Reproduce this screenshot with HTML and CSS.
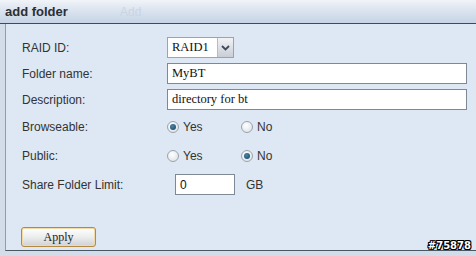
FILE: index.html
```html
<!DOCTYPE html>
<html lang="en">
<head>
    <meta charset="UTF-8">
    <title>add folder</title>
    <link rel="stylesheet" href="styles.css">
</head>
<body>
    <!-- Title bar -->
    <div class="title-bar">
        <span class="title">add folder</span>
        <span class="ghost">Add</span>
    </div>

    <!-- Form panel -->
    <div class="panel">
        <div class="row">
            <label class="field-label">RAID ID:</label>
            <div class="select-box">
                <span class="select-value">RAID1</span>
                <span class="select-arrow">
                    <svg width="9" height="6" viewBox="0 0 9 6"><path d="M1 1 L4.5 4.5 L8 1" fill="none" stroke="#3b4a5c" stroke-width="1.8"/></svg>
                </span>
            </div>
        </div>
        <div class="row">
            <label class="field-label">Folder name:</label>
            <div class="text-input wide">MyBT</div>
        </div>
        <div class="row">
            <label class="field-label">Description:</label>
            <div class="text-input wide">directory for bt</div>
        </div>
        <div class="row radio-row first">
            <label class="field-label">Browseable:</label>
            <span class="radio-opt"><span class="radio checked"></span>Yes</span>
            <span class="radio-opt"><span class="radio"></span>No</span>
        </div>
        <div class="row radio-row">
            <label class="field-label">Public:</label>
            <span class="radio-opt"><span class="radio"></span>Yes</span>
            <span class="radio-opt"><span class="radio checked"></span>No</span>
        </div>
        <div class="row limit-row">
            <label class="field-label">Share Folder Limit:</label>
            <div class="text-input small">0</div>
            <span class="unit">GB</span>
        </div>

        <button class="apply-button">Apply</button>
    </div>

    <span class="watermark">#75878</span>
</body>
</html>
```

FILE: styles.css
```css
body {
    margin: 0;
    width: 476px;
    height: 256px;
    overflow: hidden;
    position: relative;
    background-color: #d3dde9;
    font-family: "Liberation Sans", Arial, sans-serif;
    font-size: 12px;
    color: #333;
}

/* Title bar */
.title-bar {
    height: 23px;
    border-bottom: 1px solid #3e4b59;
    background: linear-gradient(#f1f4f9, #dde5f0 40%, #c6d4e6);
    display: flex;
    align-items: center;
    padding-left: 5px;
}

.title {
    font-size: 13px;
    font-weight: bold;
    color: #2a2f36;
    width: 115px;
}

.ghost {
    color: #c9d5e4;
    font-size: 12px;
}

/* Form panel */
.panel {
    margin-left: 5px;
    height: 227px;
    box-sizing: border-box;
    border-left: 1px solid #8e9cab;
    border-bottom: 1px solid #4a5765;
    background-color: #dde8f4;
    padding: 13px 0 0 16px;
    display: flex;
    flex-direction: column;
}

.row {
    display: flex;
    align-items: center;
    height: 21px;
    margin-bottom: 5px;
}

.radio-row {
    height: 22px;
    margin-bottom: 7px;
}

.radio-row.first {
    margin-top: 1px;
}

.limit-row {
    margin-top: 0;
}

.field-label {
    width: 145px;
    flex-shrink: 0;
}

/* Select */
.select-box {
    display: flex;
    height: 21px;
    box-sizing: border-box;
    border: 1px solid #98a4b0;
    background: #fff;
}

.select-value {
    width: 45px;
    padding-left: 4px;
    font-family: "Liberation Serif", "Times New Roman", serif;
    font-size: 12.5px;
    color: #111;
    line-height: 19px;
}

.select-arrow {
    width: 15px;
    display: flex;
    align-items: center;
    justify-content: center;
    border-left: 1px solid #b4bcc6;
    background: linear-gradient(#f2f3f5, #c9ced5);
}

/* Text inputs */
.text-input {
    height: 21px;
    box-sizing: border-box;
    border: 1px solid #7d8995;
    background: #fff;
    padding-left: 4px;
    line-height: 19px;
    font-family: "Liberation Serif", "Times New Roman", serif;
    font-size: 12.5px;
    color: #111;
}

.text-input.wide {
    width: 300px;
}

.text-input.small {
    width: 60px;
    margin-left: 8px;
    font-family: "Liberation Sans", Arial, sans-serif;
    font-size: 12px;
    line-height: 20px;
}

.unit {
    margin-left: 11px;
}

/* Radios */
.radio-opt {
    display: flex;
    align-items: center;
    width: 74px;
}

.radio {
    width: 10px;
    height: 10px;
    border-radius: 50%;
    border: 1px solid #9aa3ad;
    background: radial-gradient(circle at 40% 35%, #ffffff, #d8dde3);
    margin-right: 4px;
    position: relative;
}

.radio.checked::after {
    content: "";
    position: absolute;
    left: 2px;
    top: 2px;
    width: 6px;
    height: 6px;
    border-radius: 50%;
    background: radial-gradient(circle at 40% 35%, #4a86a8, #16425e);
}

/* Apply button */
.apply-button {
    margin-top: 27px;
    width: 75px;
    height: 20px;
    border: 1px solid #b58a3e;
    border-radius: 3px;
    background: linear-gradient(#ffffff, #eceded 50%, #cfd1d4);
    box-shadow: inset 0 0 0 1px #f3d9a6;
    font-family: "Liberation Serif", "Times New Roman", serif;
    font-size: 12px;
    color: #222;
    padding: 0;
    margin-left: -1px;
}

/* Image tag in the corner */
.watermark {
    position: absolute;
    right: 5px;
    bottom: 5px;
    font-family: "DejaVu Sans", sans-serif;
    font-weight: bold;
    font-size: 10px;
    color: #fff;
    text-shadow: 1px 0 0 #000, -1px 0 0 #000, 0 1px 0 #000, 0 -1px 0 #000,
                 1px 1px 0 #000, -1px -1px 0 #000, 1px -1px 0 #000, -1px 1px 0 #000;
}
```
